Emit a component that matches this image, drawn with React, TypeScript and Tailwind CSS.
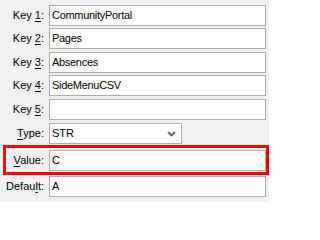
import React from "react";

function Field({ children }: { children?: React.ReactNode }) {
  return (
    <div className="w-[217px] h-[21px] border border-[#adadad] bg-white pl-[2px] flex items-center leading-none tracking-[-0.3px]">
      {children}
    </div>
  );
}

function Label({ children, w = "w-[49px]" }: { children: React.ReactNode; w?: string }) {
  return <div className={`${w} pr-[5px] text-right leading-none whitespace-nowrap`}>{children}</div>;
}

export default function App() {
  const keys = [
    { n: "1", v: "CommunityPortal", mt: "mt-0" },
    { n: "2", v: "Pages", mt: "mt-[2px]" },
    { n: "3", v: "Absences", mt: "mt-[3px]" },
    { n: "4", v: "SideMenuCSV", mt: "mt-[2px]" },
    { n: "5", v: "", mt: "mt-[3px]" },
  ];
  return (
    <div className="w-[269px] h-[202px] bg-[#f0f0f0] font-['Liberation_Sans',Arial,sans-serif] text-[11px] text-black pt-[5px] flex flex-col overflow-hidden">
      {keys.map((k) => (
        <div key={k.n} className={`flex items-center h-[21px] ${k.mt}`}>
          <Label>
            Key <span className="underline underline-offset-[2px]">{k.n}</span>:
          </Label>
          <Field>{k.v}</Field>
        </div>
      ))}
      <div className="flex items-center h-[21px] mt-[3px]">
        <Label>
          <span className="underline underline-offset-[2px]">T</span>ype:
        </Label>
        <div className="w-[133px] h-[21px] border border-[#adadad] bg-white pl-[2px] pr-[5px] flex items-center justify-between leading-none">
          <span>STR</span>
          <svg width="9" height="6" viewBox="0 0 9 6">
            <polyline points="1,1 4.5,4.5 8,1" fill="none" stroke="#606060" strokeWidth="1.8" />
          </svg>
        </div>
      </div>
      <div className="mt-[1px] ml-[3px] w-[266px] border-[3px] border-[#ff0000] pt-[2px] pb-[1px]">
        <div className="flex items-center h-[21px]">
          <Label w="w-[43px]">
            <span className="underline underline-offset-[2px]">V</span>alue:
          </Label>
          <Field>C</Field>
        </div>
      </div>
      <div className="flex items-center h-[21px] mt-[1px]">
        <Label>
          Defau<span className="underline underline-offset-[2px]">l</span>t:
        </Label>
        <Field>A</Field>
      </div>
    </div>
  );
}
